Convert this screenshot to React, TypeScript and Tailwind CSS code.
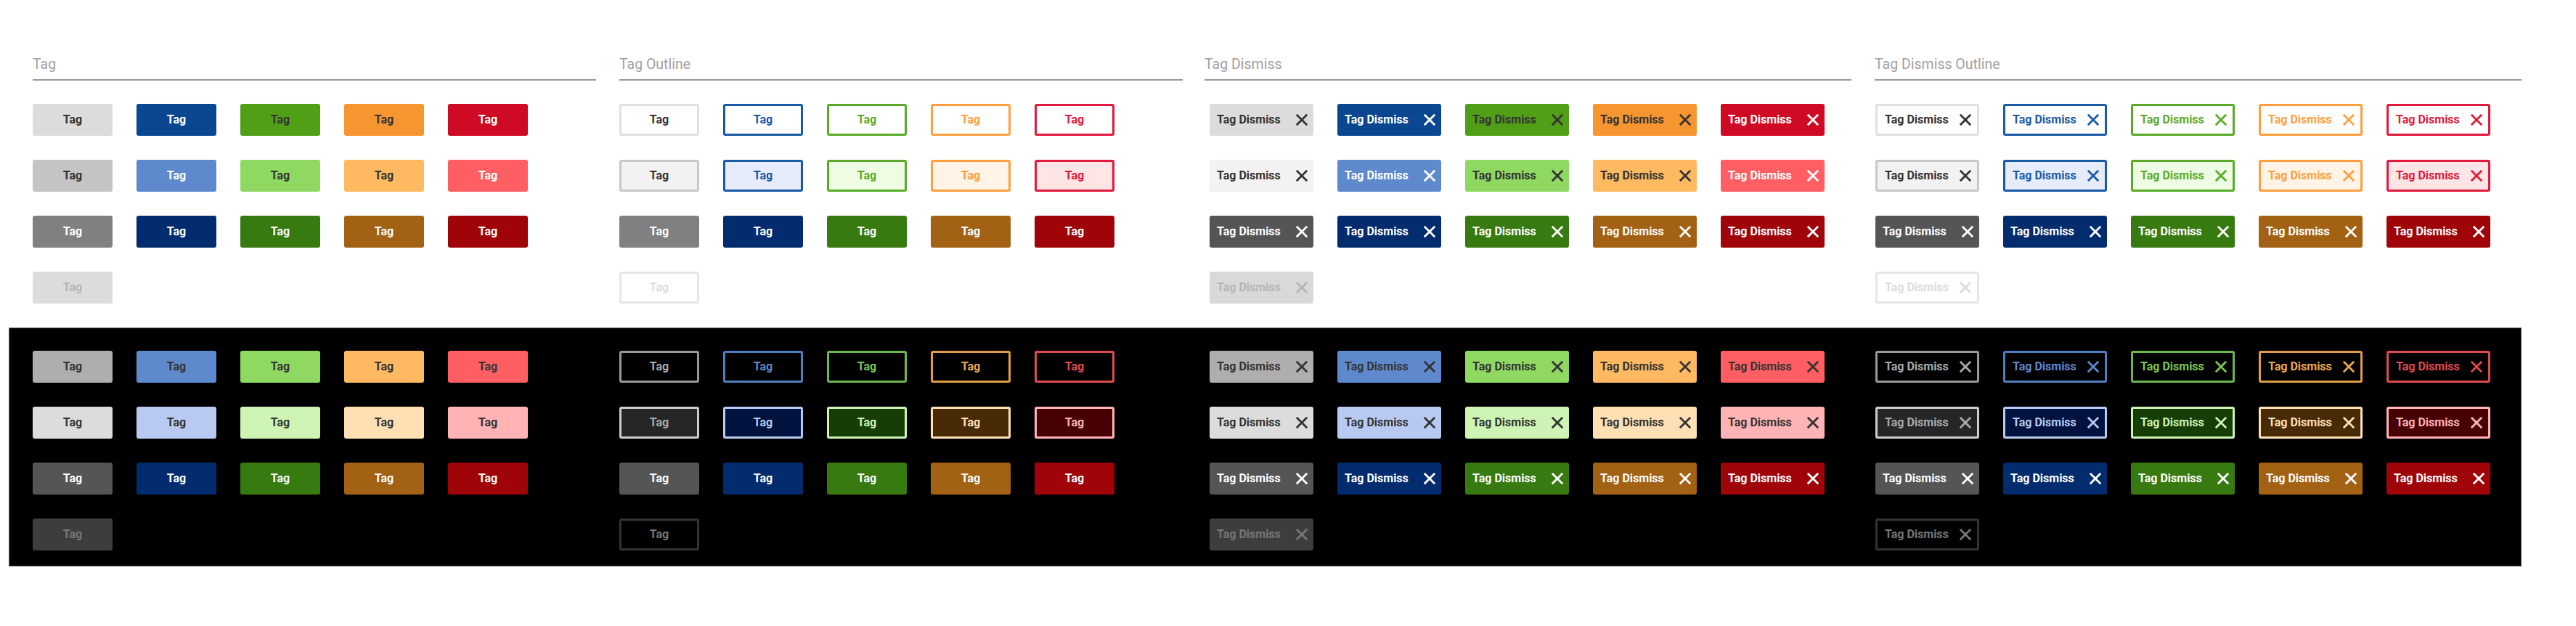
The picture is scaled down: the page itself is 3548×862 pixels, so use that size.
const columns = "grid grid-cols-[808px_806px_923px_891px]";

const lightSolid = [
  ["bg-[#dcdcdc] text-[#333333]", "bg-[#0a4790] text-white", "bg-[#519f17] text-[#333333]", "bg-[#f79530] text-[#333333]", "bg-[#cf0a24] text-white"],
  ["bg-[#c4c4c4] text-[#333333]", "bg-[#5f89cd] text-white", "bg-[#8fd862] text-[#333333]", "bg-[#ffb961] text-[#333333]", "bg-[#ff5f62] text-white"],
  ["bg-[#808080] text-white", "bg-[#032c6e] text-white", "bg-[#377a10] text-white", "bg-[#a36114] text-white", "bg-[#9f0409] text-white"],
  ["bg-[#dcdcdc] text-[#b5b5b5]"],
];

const lightOutline = [
  ["border-[3px] border-[#e0e0e0] bg-white text-[#333333]", "border-[3px] border-[#1a5aa5] bg-white text-[#1a5aa5]", "border-[3px] border-[#5aaa28] bg-white text-[#5aaa28]", "border-[3px] border-[#ff9f40] bg-white text-[#ff9f40]", "border-[3px] border-[#df1a3c] bg-white text-[#df1a3c]"],
  ["border-[3px] border-[#c8c8c8] bg-[#f2f2f2] text-[#333333]", "border-[3px] border-[#1a5aa5] bg-[#e6ecfb] text-[#1a5aa5]", "border-[3px] border-[#5aaa28] bg-[#eefce4] text-[#5aaa28]", "border-[3px] border-[#ff9f40] bg-[#fff4e5] text-[#ff9f40]", "border-[3px] border-[#df1a3c] bg-[#ffe5e6] text-[#df1a3c]"],
  ["bg-[#808080] text-white", "bg-[#032c6e] text-white", "bg-[#377a10] text-white", "bg-[#a36114] text-white", "bg-[#9f0409] text-white"],
  ["border-[3px] border-[#e6e6e6] bg-white text-[#dcdcdc]"],
];

const darkSolid = [
  ["bg-[#aeaeae] text-[#333333]", "bg-[#5f89cd] text-[#333333]", "bg-[#8fd862] text-[#333333]", "bg-[#ffb961] text-[#333333]", "bg-[#ff5f62] text-[#333333]"],
  ["bg-[#dcdcdc] text-[#333333]", "bg-[#b8caf2] text-[#333333]", "bg-[#cdf4b5] text-[#333333]", "bg-[#ffe0b5] text-[#333333]", "bg-[#ffb3b5] text-[#333333]"],
  ["bg-[#555555] text-white", "bg-[#032c6e] text-white", "bg-[#377a10] text-white", "bg-[#a36114] text-white", "bg-[#9f0409] text-white"],
  ["bg-[#3d3d3d] text-[#777777]"],
];

const darkOutline = [
  ["border-[3px] border-[#999999] bg-black text-[#aaaaaa]", "border-[3px] border-[#4f7fc0] bg-black text-[#5f89cd]", "border-[3px] border-[#6db84d] bg-black text-[#7cc655]", "border-[3px] border-[#e09d45] bg-black text-[#eda94f]", "border-[3px] border-[#dd4c4f] bg-black text-[#e4494d]"],
  ["border-[3px] border-[#cccccc] bg-[#262626] text-[#aaaaaa]", "border-[3px] border-[#b8caf2] bg-[#00123d] text-[#b8caf2]", "border-[3px] border-[#cdf4b5] bg-[#173d06] text-[#cdf4b5]", "border-[3px] border-[#ffe0b5] bg-[#482a06] text-[#ffe0b5]", "border-[3px] border-[#ffb3b5] bg-[#470003] text-[#ffb3b5]"],
  ["bg-[#555555] text-white", "bg-[#032c6e] text-white", "bg-[#377a10] text-white", "bg-[#a36114] text-white", "bg-[#9f0409] text-white"],
  ["border-[3px] border-[#333333] bg-black text-[#777777]"],
];

// the dismiss groups only differ from the plain ones on the first grey chips
const withFirst = (rows: string[][], overrides: Record<number, string>) =>
  rows.map((row, i) => (overrides[i] ? [overrides[i], ...row.slice(1)] : row));

const lightGroups = [
  { rows: lightSolid, dismiss: false, inset: "" },
  { rows: lightOutline, dismiss: false, inset: "" },
  {
    rows: withFirst(lightSolid, { 1: "bg-[#f2f2f2] text-[#333333]", 2: "bg-[#555555] text-white", 3: "bg-[#d9d9d9] text-[#b5b5b5]" }),
    dismiss: true,
    inset: "pl-[7px]",
  },
  { rows: withFirst(lightOutline, { 2: "bg-[#555555] text-white" }), dismiss: true, inset: "pl-[1px]" },
];

const darkGroups = [
  { rows: darkSolid, dismiss: false, inset: "" },
  { rows: withFirst(darkOutline, { 2: "bg-[#555555] text-white" }), dismiss: false, inset: "" },
  { rows: darkSolid, dismiss: true, inset: "pl-[7px]" },
  { rows: darkOutline, dismiss: true, inset: "pl-[1px]" },
];

const headers = [
  { title: "Tag", width: "w-[776px]" },
  { title: "Tag Outline", width: "w-[776px]" },
  { title: "Tag Dismiss", width: "w-[891px]" },
  { title: "Tag Dismiss Outline", width: "w-[891px]" },
];

function DismissIcon() {
  return (
    <svg viewBox="0 0 16 16" className="h-4 w-4 shrink-0" fill="none" stroke="currentColor" strokeWidth="2.8">
      <path d="M.8.8 15.2 15.2M15.2.8.8 15.2" />
    </svg>
  );
}

function Tag({ dismiss, className }: { dismiss: boolean; className: string }) {
  if (dismiss) {
    return (
      <div className={`flex h-11 w-[143px] items-center justify-between rounded-[3px] pl-[10px] pr-[8px] text-[16px] font-bold ${className}`}>
        <span>Tag Dismiss</span>
        <DismissIcon />
      </div>
    );
  }
  return (
    <div className={`flex h-11 w-[110px] items-center justify-center rounded-[3px] text-[16px] font-bold ${className}`}>
      <span>Tag</span>
    </div>
  );
}

function TagGroup({ rows, dismiss, inset }: { rows: string[][]; dismiss: boolean; inset: string }) {
  return (
    <div className={`flex flex-col gap-[33px] ${inset}`}>
      {rows.map((row, i) => (
        <div key={i} className="flex gap-[33px]">
          {row.map((cls, j) => (
            <Tag key={j} dismiss={dismiss} className={cls} />
          ))}
        </div>
      ))}
    </div>
  );
}

export default function App() {
  return (
    <div className="h-[862px] w-[3548px] overflow-hidden bg-white pt-[72px] font-['Roboto',sans-serif]">
      <div className={`${columns} pl-[45px]`}>
        {headers.map((h) => (
          <div key={h.title} className={`${h.width} h-[39px] border-b-2 border-[#999999] text-[19.5px] leading-[34px] text-[#a0a0a0]`}>
            {h.title}
          </div>
        ))}
      </div>

      <div className={`${columns} mt-[32px] pl-[45px]`}>
        {lightGroups.map((g, i) => (
          <TagGroup key={i} {...g} />
        ))}
      </div>

      <div className={`${columns} ml-[12px] mt-[33px] h-[329px] w-[3461px] border border-[#666666] bg-black pl-[32px] pt-[31px]`}>
        {darkGroups.map((g, i) => (
          <TagGroup key={i} {...g} />
        ))}
      </div>
    </div>
  );
}
